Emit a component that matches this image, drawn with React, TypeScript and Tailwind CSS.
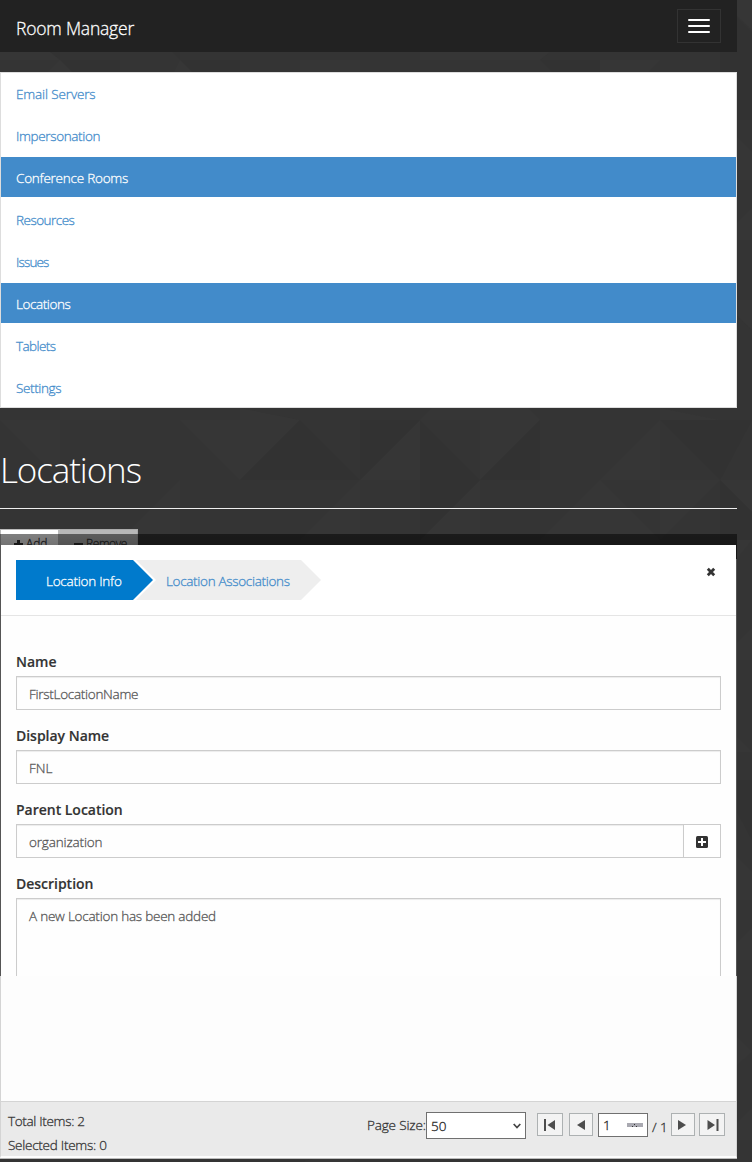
import type { ReactNode } from 'react'

const LIGHT_TRIANGLES = [
  '180,420 300,420 240,480', '360,480 420,420 420,480', '480,420 540,420 480,480',
  '600,480 660,420 660,480', '120,540 180,480 180,540', '300,540 360,480 360,540',
  '420,540 480,480 480,540', '540,540 600,480 660,540', '660,540 720,480 660,480',
  '0,420 60,420 60,480', '60,408 120,408 120,420 60,420', '240,408 300,420 240,420',
  '420,420 432,408 528,408 540,420', '660,408 720,420 660,420', '720,480 752,480 752,512',
  '0,52 60,52 60,60 0,60', '60,60 120,60 120,80 40,80', '170,80 180,60 240,60 240,80',
  '300,60 360,60 360,80 300,80', '420,52 480,52 480,60 420,60', '480,52 550,52 540,60 480,60',
  '600,60 660,60 668,52 640,80 600,80', '737,0 752,0 752,30 737,16',
  '720,120 752,152 752,180 720,180', '720,240 752,208 752,240', '720,300 752,300 752,330',
  '720,540 752,540 720,580', '720,660 752,628 752,660', '720,720 752,752 720,752',
  '720,840 752,872 752,900 720,900', '720,960 752,928 752,960', '720,1020 752,1052 720,1080',
  '720,1140 752,1108 752,1140', '300,1162 330,1155 360,1162',
]
const DARK_TRIANGLES = [
  '300,420 240,480 360,480', '420,420 420,540 480,480', '360,420 420,420 360,480',
  '540,420 480,480 540,480', '720,480 752,512 752,540 720,540', '660,420 752,420 720,480',
  '50,52 60,60 60,52', '60,60 120,60 120,72 72,72', '172,52 180,60 180,52', '180,60 240,60 240,72 192,72',
  '540,60 600,60 600,72 552,72', '720,0 752,32 752,120 720,120', '720,780 752,780 752,840',
]

function Backdrop() {
  return (
    <svg className="absolute inset-0 h-[1162px] w-[752px]" viewBox="0 0 752 1162" aria-hidden="true">
      <rect width="752" height="1162" fill="#343434" />
      {LIGHT_TRIANGLES.map((p) => <polygon key={p} points={p} fill="#363636" />)}
      {DARK_TRIANGLES.map((p) => <polygon key={p} points={p} fill="#323232" />)}
    </svg>
  )
}

const MENU = [
  { label: 'Email Servers', track: 'tracking-[-0.14px]' },
  { label: 'Impersonation', track: 'tracking-[-0.36px]' },
  { label: 'Conference Rooms', track: 'tracking-[-0.23px]', active: true },
  { label: 'Resources', track: 'tracking-[-0.52px]' },
  { label: 'Issues', track: 'tracking-[-0.85px]' },
  { label: 'Locations', track: 'tracking-[-0.42px]', active: true },
  { label: 'Tablets', track: 'tracking-[-0.6px]' },
  { label: 'Settings', track: 'tracking-[-0.38px]' },
]

function Field({ label, children }: { label: string; children: ReactNode }) {
  return (
    <div className="flex flex-col">
      <div className="mb-[5px] flex h-5 items-center pt-[2px] text-[14px] font-semibold tracking-[-0.02px] text-[#333] [-webkit-text-stroke:0.15px]">{label}</div>
      {children}
    </div>
  )
}

const BOX = 'flex h-[34px] items-center border border-[#ccc] bg-[#fefefe] pl-3 pt-[2px] text-[#555] shadow-[inset_0_1px_1px_rgba(0,0,0,0.075)]'

function PagerButton({ width, children }: { width: string; children: ReactNode }) {
  return (
    <button className={`flex h-[23px] shrink-0 items-center justify-center border border-[#adb1b2] bg-[#f3f3f3] ${width}`}>
      <svg width="12" height="12" viewBox="0 0 12 12" fill="#4d4d4d" className="overflow-visible">{children}</svg>
    </button>
  )
}

export default function App() {
  return (
    <div className="relative h-[1162px] w-[752px] overflow-hidden font-['Open_Sans',sans-serif] text-[13.5px] leading-5 font-light [-webkit-text-stroke:0.28px]">
      <Backdrop />
      <div className="relative flex w-[737px] flex-col">
        <nav className="flex h-[52px] items-center justify-between bg-[#222] pr-4 pl-4">
          <span className="pt-[3px] text-[17.5px] tracking-[-0.2px] text-white">Room Manager</span>
          <button className="flex h-[34px] w-[44px] flex-col items-center justify-center gap-1 border border-[#333]">
            <i className="h-[2px] w-[22px] rounded-[1px] bg-white" />
            <i className="h-[2px] w-[22px] rounded-[1px] bg-white" />
            <i className="h-[2px] w-[22px] rounded-[1px] bg-white" />
          </button>
        </nav>

        <ul className="mt-5 flex h-[336px] flex-col gap-[2px] border border-[#ddd] bg-white">
          {MENU.map((m) => (
            <li key={m.label} className={`flex h-10 shrink-0 items-center pt-[2px] pl-[15px] ${m.track} ${m.active ? 'bg-[#428bca] text-white' : 'text-[#428bca]'}`}>
              {m.label}
            </li>
          ))}
        </ul>

        <h1 className="mt-[41px] flex h-[59px] items-start text-[35px] leading-[42px] font-light tracking-[-1.1px] text-white [-webkit-text-stroke:0]">Locations</h1>
        <div className="h-px bg-[#eee]" />

        <div className="mt-5 flex h-4 overflow-hidden text-[12px] text-[#333]">
          <div className="flex h-[30px] w-[60px] shrink-0 items-center gap-[3px] border border-r-2 border-[#bbb] bg-white pl-[13px]">
            <svg width="9" height="9" viewBox="0 0 9 9" className="shrink-0"><path d="M3 0h3v3h3v3H6v3H3V6H0V3h3z" fill="#333" /></svg>
            <span>Add</span>
          </div>
          <div className="flex h-[30px] w-[78px] shrink-0 items-center gap-[3px] border border-l-0 border-[#aaa] bg-[#b8b8b8] pl-[14px]">
            <svg width="9" height="9" viewBox="0 0 9 9" className="shrink-0"><path d="M0 3h9v3H0z" fill="#333" /></svg>
            <span className="tracking-[-0.4px]">Remove</span>
          </div>
        </div>

        <section className="flex h-[431px] flex-col overflow-hidden border-x border-[#555] bg-[#fefefe]">
          <header className="flex h-[71px] shrink-0 items-start justify-between border-b border-[#e5e5e5] bg-white pt-[15px] pr-[20px] pl-[15px]">
            <div className="relative flex h-10 w-[305px]">
              <svg className="absolute inset-0" width="305" height="40" viewBox="0 0 305 40">
                <path d="M100 0H285l20 20-20 20H100z" fill="#eee" />
                <path d="M100 0H120l20 20-20 20H100z" fill="#fff" />
                <path d="M0 0H117l20 20-20 20H0z" fill="#007acc" />
              </svg>
              <span className="relative flex w-[150px] items-center pt-[2px] pl-[30px] tracking-[-0.24px] text-white">Location Info</span>
              <span className="relative flex items-center pt-[2px] tracking-[-0.32px] whitespace-nowrap text-[#428bca]">Location Associations</span>
            </div>
            <svg className="mt-[7px]" width="10" height="10" viewBox="0 0 10 10"><path d="M1.8 1.8l6.4 6.4M8.2 1.8L1.8 8.2" stroke="#333" strokeWidth="2.8" /></svg>
          </header>
          <div className="flex flex-col gap-[15px] px-[15px] pt-[35px]">
            <Field label="Name"><div className={`${BOX} tracking-[-0.28px]`}>FirstLocationName</div></Field>
            <Field label="Display Name"><div className={BOX}>FNL</div></Field>
            <Field label="Parent Location">
              <div className="flex">
                <div className={`${BOX} grow border-r-0 tracking-[-0.15px]`}>organization</div>
                <button className="flex h-[34px] w-[38px] items-center justify-center border border-[#ccc] bg-white pt-[2px]">
                  <svg width="12" height="12" viewBox="0 0 12 12"><rect width="12" height="12" rx="1.5" fill="#333" /><path d="M5 2h2v3h3v2H7v3H5V7H2V5h3z" fill="#fff" /></svg>
                </button>
              </div>
            </Field>
            <Field label="Description">
              <div className="h-[100px] border border-[#ccc] bg-[#fefefe] pt-[7px] pl-3 tracking-[-0.23px] text-[#555] shadow-[inset_0_1px_1px_rgba(0,0,0,0.075)]">A new Location has been added</div>
            </Field>
          </div>
        </section>

        <div className="h-[125px] border-x border-[#d4d4d4] bg-[#fdfdfd]" />
        <footer className="flex h-[57px] justify-between border-x border-t border-b-2 border-x-[#d4d4d4] border-t-[#d4d4d4] border-b-[#fdfdfd] bg-[#eaeaea] text-[#333]">
          <div className="flex flex-col gap-1 pt-[9px] pl-[7px]">
            <span className="tracking-[-0.33px]">Total Items: 2</span>
            <span className="tracking-[-0.26px]">Selected Items: 0</span>
          </div>
          <div className="flex items-start pr-[11px]">
            <span className="mt-[13px] w-[59px] tracking-[-0.15px] whitespace-nowrap">Page Size:</span>
            <div className="mt-[10px] mr-[11px] flex h-[27px] w-[100px] items-center justify-between border border-[#707070] bg-white pr-1 pl-1 text-[#222]">
              <span className="pt-px">50</span>
              <svg width="8" height="8" viewBox="0 0 8 8" fill="none" stroke="#444" strokeWidth="1.7"><path d="M.7 2L4 5.6 7.3 2" /></svg>
            </div>
            <div className="mt-[11px] mr-[6px]"><PagerButton width="w-[26px]"><path d="M0 0h2v12H0zM11 1v10L3.5 6z" /></PagerButton></div>
            <div className="mt-[11px] mr-[5px]"><PagerButton width="w-6"><path d="M10 1v10L2 6z" /></PagerButton></div>
            <div className="mt-[11px] flex h-6 w-[50px] items-center justify-between border border-[#707070] bg-white pr-1 pl-1 text-[#222]">
              <span>1</span>
              <svg width="16" height="4" viewBox="0 0 16 4"><path fill="#a9a9b1" d="M0 0h16v4H0z" /><path fill="#333" d="M7 1h1v1H7zM5 3h1v1H5zM9 3h1v1H9z" /></svg>
            </div>
            <span className="mt-[15px] ml-1 w-[19px] whitespace-nowrap">/ 1</span>
            <div className="mt-[11px] mr-1"><PagerButton width="w-6"><path d="M1 1v10l8-5z" /></PagerButton></div>
            <div className="mt-[11px]"><PagerButton width="w-[26px]"><path d="M10.5 0h2v12h-2zM1.5 1v10l7.5-5z" /></PagerButton></div>
          </div>
        </footer>
        <div className="h-px bg-[#bbb]" />
      </div>
      <div className="absolute top-[534px] left-0 h-[11px] w-[737px] bg-gradient-to-b from-black/50 to-black/55" />
      <div className="absolute top-[545px] left-[736px] h-[14px] w-px bg-[#161616]" />
    </div>
  )
}
